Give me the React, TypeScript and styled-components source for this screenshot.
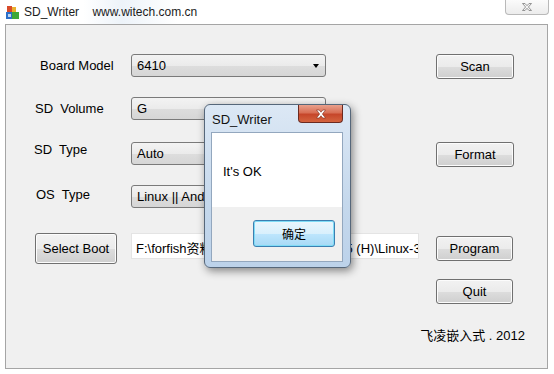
import styled, { createGlobalStyle } from "styled-components";

const GlobalStyle = createGlobalStyle`
  html, body {
    margin: 0;
    padding: 0;
    background: #ffffff;
  }
  body {
    font-family: "Liberation Sans", Arial, "Noto Sans CJK SC", sans-serif;
    font-size: 13px;
    color: #000;
  }
`;

const Window = styled.div`
  position: relative;
  width: 554px;
  height: 374px;
  overflow: hidden;
  background: #ffffff;
`;

const TitleBar = styled.div`
  display: flex;
  align-items: center;
  height: 24px;
  padding-left: 6px;
  box-sizing: border-box;
  background: linear-gradient(90deg, #ffffff 0%, #ffffff 15%, #edf3f9 22%, #ffffff 32%, #ffffff 100%);
`;

const AppTitle = styled.span`
  font-size: 12px;
  color: #1b1b1b;
  margin-left: 5px;
  white-space: pre;
`;

const CloseBox = styled.div`
  margin-left: auto;
  margin-right: 5px;
  align-self: flex-start;
  width: 44px;
  height: 15px;
  box-sizing: border-box;
  border: 1px solid #b9b9b9;
  border-top: none;
  border-radius: 0 0 4px 4px;
  background: linear-gradient(#fbfbfb, #ececec);
  display: flex;
  align-items: center;
  justify-content: center;
`;

const Client = styled.div`
  margin: 0 6px 0 5px;
  height: 345px;
  box-sizing: border-box;
  border: 1px solid #a5a5a5;
  background: #f0f0f0;
  display: flex;
  flex-direction: column;
`;

const Form = styled.div`
  display: grid;
  grid-template-columns: 125px 288px 17px 78px;
  grid-template-rows: 43px 45px 43px 48px 46px 25px;
  padding-top: 29px;
  align-items: start;
`;

const Label = styled.div<{ $indent: number; $lift?: number }>`
  grid-column: 1;
  padding-left: ${(p) => p.$indent}px;
  height: 23px;
  line-height: ${(p) => 23 - (p.$lift ?? 0) * 2}px;
  white-space: pre;
`;

const Combo = styled.div`
  grid-column: 2;
  width: 195px;
  height: 23px;
  box-sizing: border-box;
  border: 1px solid #7a7a7a;
  border-radius: 3px;
  background: linear-gradient(#f3f3f3 0%, #ebebeb 50%, #dddddd 51%, #d6d6d6 100%);
  display: flex;
  align-items: center;
  padding-left: 5px;
  position: relative;
  white-space: nowrap;
  overflow: hidden;
`;

const Arrow = styled.span`
  position: absolute;
  right: 6px;
  top: 9px;
  width: 0;
  height: 0;
  border-left: 3.5px solid transparent;
  border-right: 3.5px solid transparent;
  border-top: 4px solid #000;
`;

const Button = styled.button<{ $col: number; $w: number; $h: number; $shift?: number }>`
  grid-column: ${(p) => p.$col};
  justify-self: start;
  margin-left: ${(p) => p.$shift ?? 0}px;
  width: ${(p) => p.$w}px;
  height: ${(p) => p.$h}px;
  box-sizing: border-box;
  border: 1px solid #707070;
  border-radius: 3px;
  background: linear-gradient(#f2f2f2 0%, #ebebeb 50%, #dddddd 51%, #cfcfcf 100%);
  box-shadow: inset 0 0 0 1px #fcfcfc;
  font-family: "Liberation Sans", Arial, sans-serif;
  font-size: 13px;
  color: #000;
  padding: 0;
`;

const PathField = styled.div`
  grid-column: 2;
  width: 288px;
  height: 26px;
  box-sizing: border-box;
  border: 1px solid #e4e4e4;
  background: #ffffff;
  padding: 4px 0 0 4px;
  white-space: nowrap;
  overflow: hidden;
  font-family: "Liberation Sans", Arial, "Noto Sans CJK SC", sans-serif;
`;

const Footer = styled.div`
  align-self: flex-end;
  margin-top: 24px;
  margin-right: 22px;
  line-height: 16px;
  font-family: "Liberation Sans", Arial, "Noto Sans CJK SC", sans-serif;
`;

const Dialog = styled.div`
  position: absolute;
  left: 204px;
  top: 104px;
  width: 147px;
  height: 164px;
  box-sizing: border-box;
  border: 1px solid #56677a;
  border-radius: 6px;
  background: linear-gradient(#dce8f5, #c5d8ec 60%, #bcd2ea);
  box-shadow: 2px 3px 8px rgba(0, 0, 0, 0.45);
  display: flex;
  flex-direction: column;
`;

const DialogTitle = styled.div`
  display: flex;
  align-items: flex-start;
  height: 27px;
  padding-left: 7px;
  padding-right: 7px;
`;

const DialogCaption = styled.span`
  margin-top: 7px;
  font-size: 13px;
  color: #111;
`;

const RedClose = styled.div`
  margin-left: auto;
  width: 45px;
  height: 18px;
  box-sizing: border-box;
  border: 1px solid #6b2a20;
  border-top: none;
  border-radius: 0 0 4px 4px;
  background: linear-gradient(#e9a08c 0%, #d86f55 45%, #c6462a 55%, #d4643f 100%);
  display: flex;
  align-items: center;
  justify-content: center;
`;

const DialogBody = styled.div`
  margin: 0 7px 0 6px;
  height: 130px;
  box-sizing: border-box;
  border: 1px solid #93a7be;
  display: flex;
  flex-direction: column;
`;

const Message = styled.div`
  height: 74px;
  background: #ffffff;
  padding: 31px 0 0 11px;
  box-sizing: border-box;
  font-size: 13px;
`;

const ButtonArea = styled.div`
  flex: 1;
  background: #f0f0f0;
  display: flex;
  justify-content: flex-end;
  align-items: flex-start;
  padding: 13px 7px 0 0;
`;

const OkButton = styled.button`
  width: 82px;
  height: 27px;
  box-sizing: border-box;
  border: 1px solid #3c7fb1;
  border-radius: 3px;
  background: linear-gradient(#eaf6fd 0%, #d9f0fc 50%, #bee6fd 51%, #a7d9f5 100%);
  box-shadow: inset 0 0 0 1px #7fdcf6;
  font-family: "Noto Sans CJK SC", sans-serif;
  font-size: 12px;
  color: #000;
  padding: 0;
`;

function AppIcon() {
  return (
    <svg width="13" height="13" viewBox="0 0 13 13">
      <rect x="1" y="0" width="5" height="6" fill="#d84a2a" />
      <rect x="6" y="1" width="4" height="5" fill="#e8b030" />
      <rect x="0" y="6" width="6" height="7" fill="#2a6fc9" />
      <rect x="6" y="6" width="7" height="7" fill="#3da83a" />
      <rect x="2" y="8" width="3" height="3" fill="#ffffff" opacity="0.7" />
    </svg>
  );
}

export default function App() {
  return (
    <Window>
      <GlobalStyle />
      <TitleBar>
        <AppIcon />
        <AppTitle>{"SD_Writer    www.witech.com.cn"}</AppTitle>
        <CloseBox>
          <svg width="12" height="10" viewBox="0 0 12 10">
            <path
              d="M1.5 1.5 L4 1.5 L6 3.7 L8 1.5 L10.5 1.5 L7.4 5 L10.5 8.5 L8 8.5 L6 6.3 L4 8.5 L1.5 8.5 L4.6 5 Z"
              fill="#f4f4f4"
              stroke="#7d7d7d"
              strokeWidth="0.8"
            />
          </svg>
        </CloseBox>
      </TitleBar>
      <Client>
        <Form>
          <Label $indent={34}>Board Model</Label>
          <Combo>
            6410
            <Arrow />
          </Combo>
          <Button $col={4} $w={78} $h={25}>
            Scan
          </Button>

          <Label $indent={29}>{"SD  Volume"}</Label>
          <Combo>
            G
            <Arrow />
          </Combo>

          <Label $indent={28} $lift={4}>{"SD  Type"}</Label>
          <Combo>
            Auto
            <Arrow />
          </Combo>
          <Button $col={4} $w={78} $h={25}>
            Format
          </Button>

          <Label $indent={30} $lift={2}>{"OS  Type"}</Label>
          <Combo>
            Linux || Android
            <Arrow />
          </Combo>

          <Button $col={1} $w={82} $h={31} $shift={29}>
            Select Boot
          </Button>
          <PathField>{"F:\\forfish资料\\OK6410光盘\\2012-6-25 (H)\\Linux-3.0.1"}</PathField>
          <Button $col={4} $w={77} $h={25} style={{ marginTop: 3 }}>
            Program
          </Button>

          <Button $col={4} $w={77} $h={25}>
            Quit
          </Button>
        </Form>
        <Footer>飞凌嵌入式 . 2012</Footer>
      </Client>

      <Dialog>
        <DialogTitle>
          <DialogCaption>SD_Writer</DialogCaption>
          <RedClose>
            <svg width="12" height="10" viewBox="0 0 12 10">
              <path
                d="M1.5 1 L4.2 1 L6 3.2 L7.8 1 L10.5 1 L7.4 5 L10.5 9 L7.8 9 L6 6.8 L4.2 9 L1.5 9 L4.6 5 Z"
                fill="#ffffff"
                stroke="#7a2a1a"
                strokeWidth="0.6"
              />
            </svg>
          </RedClose>
        </DialogTitle>
        <DialogBody>
          <Message>It's OK</Message>
          <ButtonArea>
            <OkButton>确定</OkButton>
          </ButtonArea>
        </DialogBody>
      </Dialog>
    </Window>
  );
}
